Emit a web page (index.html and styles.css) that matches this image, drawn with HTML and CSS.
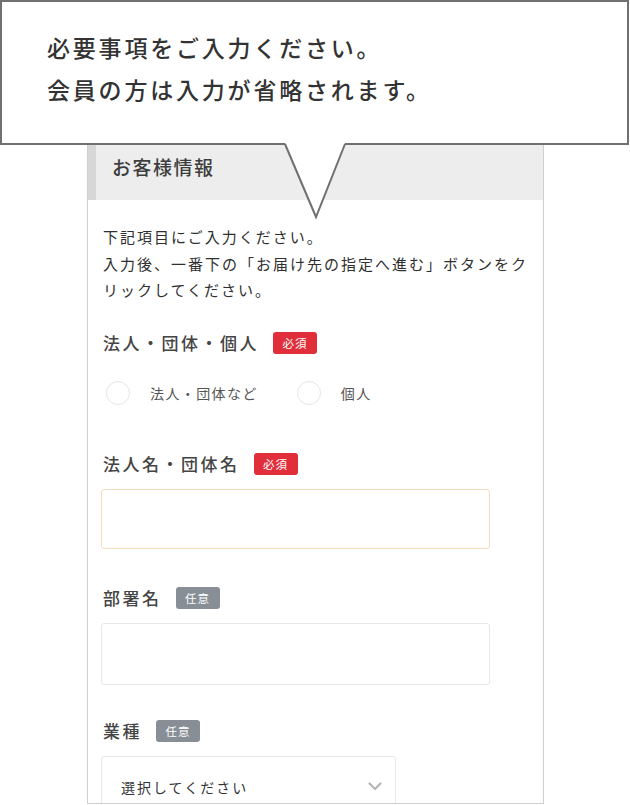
FILE: index.html
```html
<!DOCTYPE html>
<html lang="ja">
<head>
    <meta charset="UTF-8">
    <meta name="viewport" content="width=device-width, initial-scale=1.0">
    <title>お客様情報入力</title>
    <link rel="stylesheet" href="styles.css">
</head>
<body>

<div class="page">
    <section class="panel">
        <div class="panel-head">お客様情報</div>

        <div class="panel-body">
            <p class="intro">下記項目にご入力ください。<br>入力後、一番下の「お届け先の指定へ進む」ボタンをクリックしてください。</p>

            <div class="field-label field-first">
                <span class="label-text">法人・団体・個人</span>
                <span class="badge badge-req">必須</span>
            </div>
            <div class="radios">
                <label class="radio"><span class="radio-dot"></span><span class="radio-text">法人・団体など</span></label>
                <label class="radio"><span class="radio-dot"></span><span class="radio-text">個人</span></label>
            </div>

            <div class="field-label field-gap-lg">
                <span class="label-text">法人名・団体名</span>
                <span class="badge badge-req">必須</span>
            </div>
            <input class="text-input text-input-focus" type="text">

            <div class="field-label field-gap">
                <span class="label-text">部署名</span>
                <span class="badge badge-opt">任意</span>
            </div>
            <input class="text-input text-input-tall" type="text">

            <div class="field-label field-gap-sm">
                <span class="label-text">業種</span>
                <span class="badge badge-opt">任意</span>
            </div>
            <div class="select-box">
                <span class="select-text">選択してください</span>
                <svg class="select-arrow" width="14" height="9" viewBox="0 0 14 9">
                    <polyline points="1.5,1.5 7,7 12.5,1.5" fill="none" stroke="#b5b5b5" stroke-width="2.2" stroke-linecap="round" stroke-linejoin="round"/>
                </svg>
            </div>
        </div>
    </section>

    <!-- callout over the form -->
    <div class="callout">
        <p class="callout-text">必要事項をご入力ください。<br>会員の方は入力が省略されます。</p>
        <svg class="callout-tail" width="64" height="78" viewBox="0 0 64 78">
            <polygon points="2,0 62,0 33,74" fill="#fff"/>
            <polyline points="2,1 33,74 62,1" fill="none" stroke="#707070" stroke-width="2"/>
        </svg>
    </div>
</div>

</body>
</html>
```

FILE: styles.css
```css
body {
    margin: 0;
    padding: 0;
    background: #fff;
    font-family: "Noto Sans CJK JP", "Noto Sans", sans-serif;
    color: #333;
}
.page {
    position: relative;
    width: 630px;
    height: 805px;
    overflow: hidden;
}
.panel {
    box-sizing: border-box;
    margin-left: 87px;
    width: 457px;
    height: 804px;
    border: 1px solid #cfcfcf;
    border-top: none;
    overflow: hidden;
}
.panel-head {
    box-sizing: border-box;
    height: 200px;
    display: flex;
    align-items: flex-end;
    padding: 0 0 19px 16px;
    background: #ededed;
    border-left: 8px solid #d7d7d7;
    font-size: 19px;
    line-height: 28px;
    font-weight: 500;
    color: #3d3d3d;
    letter-spacing: 1.5px;
}
.panel-body {
    padding: 24px 13px 0 13px;
}
.intro {
    margin: 0;
    padding-left: 2px;
    font-size: 15px;
    line-height: 26.5px;
    letter-spacing: 2px;
    color: #2f2f2f;
}
.field-label {
    display: flex;
    align-items: center;
    gap: 14px;
    height: 24px;
    padding-left: 2px;
}
.field-first { margin-top: 27px; }
.field-gap-lg { margin-top: 47px; }
.field-gap { margin-top: 37px; }
.field-gap-sm { margin-top: 34px; }
.label-text {
    font-size: 17px;
    font-weight: 500;
    letter-spacing: 2.5px;
    color: #444;
}
.badge {
    display: inline-flex;
    align-items: center;
    justify-content: center;
    width: 44px;
    height: 22px;
    border-radius: 3px;
    color: #fff;
    font-size: 11.5px;
    letter-spacing: 1px;
}
.badge-req { background: #e02f3b; }
.badge-opt { background: #878e95; }
.radios {
    display: flex;
    align-items: center;
    margin-top: 26px;
    height: 24px;
    padding-left: 5px;
}
.radio {
    display: flex;
    align-items: center;
    gap: 20px;
    margin-right: 39px;
}
.radio-dot {
    box-sizing: border-box;
    width: 24px;
    height: 24px;
    border-radius: 50%;
    border: 1px solid #e6e6e6;
}
.radio-text {
    font-size: 14px;
    letter-spacing: 1.4px;
    color: #555;
}
.text-input {
    display: block;
    box-sizing: border-box;
    margin-top: 13px;
    width: 389px;
    height: 60px;
    border: 1px solid #e8e8e8;
    border-radius: 3px;
    background: #fff;
    outline: none;
}
.text-input-focus {
    border-color: #f3dcbd;
}
.text-input-tall {
    height: 62px;
}
.select-box {
    box-sizing: border-box;
    display: flex;
    align-items: center;
    justify-content: space-between;
    margin-top: 13px;
    width: 295px;
    height: 62px;
    padding: 0 13px 0 19px;
    border: 1px solid #e8e8e8;
    border-radius: 3px;
}
.select-text {
    font-size: 14px;
    letter-spacing: 2px;
    color: #333;
}
.callout {
    position: absolute;
    top: 0;
    left: 0;
    box-sizing: border-box;
    width: 629px;
    height: 145px;
    border: 2px solid #707070;
    background: #fff;
}
.callout-text {
    margin: 0;
    padding: 24px 0 0 45px;
    font-size: 23px;
    line-height: 42px;
    font-weight: 500;
    letter-spacing: 2.8px;
    color: #333;
}
.callout-tail {
    position: absolute;
    left: 281px;
    top: 141px;
}
```
